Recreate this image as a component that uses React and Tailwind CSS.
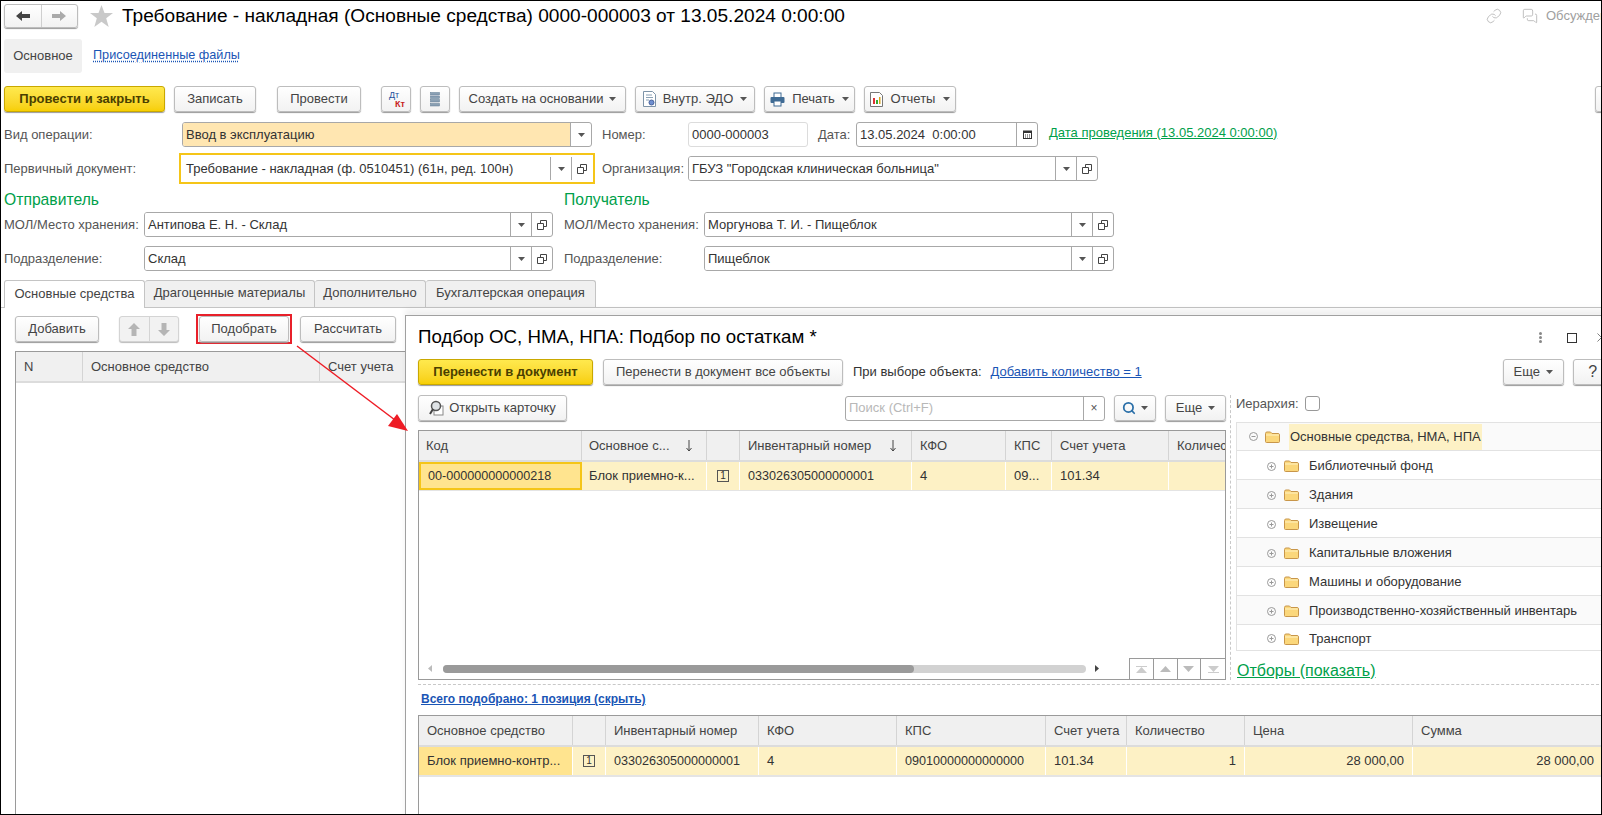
import { Search, Link, MessagesSquare, X } from 'lucide-react';

const Caret = ({ className = '' }) => (
  <svg width="7" height="4" viewBox="0 0 7 4" className={className}><path d="M0 0h7L3.5 4z" fill="#555" /></svg>
);

const Btn = ({ className = '', children }) => (
  <div className={`flex items-center justify-center shrink-0 h-[26px] rounded-[3px] border border-[#bdbdbd] bg-gradient-to-b from-white to-[#f2f2f2] shadow-[0_1px_1px_#9a9a9a] text-[13px] text-[#444] whitespace-nowrap ${className}`}>
    {children}
  </div>
);

const YellowBtn = ({ className = '', children }) => (
  <div className={`flex items-center justify-center shrink-0 h-[26px] rounded-[3px] border border-[#c9a800] bg-gradient-to-b from-[#ffe94d] to-[#f7cf00] shadow-[0_1px_1px_#9a9a9a] text-[13px] font-bold text-[#4a3f00] whitespace-nowrap ${className}`}>
    {children}
  </div>
);

const CopyIcon = () => (
  <svg width="10" height="10" viewBox="0 0 10 10" fill="none" stroke="#444"><path d="M3.500 3V.500h6v6H7" /><path d="M.500 3.500h6v6h-6z" /></svg>
);

const FieldButtons = ({ copy = true }) => (
  <>
    <div className="flex items-center justify-center w-[21px] h-full border-l border-[#a8a8a8]"><Caret /></div>
    {copy && <div className="flex items-center justify-center w-[21px] h-full border-l border-[#a8a8a8]"><CopyIcon /></div>}
  </>
);

const Field = ({ className = '', text, bg = 'bg-white', copy = true }) => (
  <div className={`flex items-center shrink-0 h-[25px] rounded-[3px] border border-[#a8a8a8] text-[13px] text-[#333] overflow-hidden ${className}`}>
    <div className={`flex-1 h-full flex items-center pl-[3px] whitespace-nowrap ${bg}`}>{text}</div>
    <FieldButtons copy={copy} />
  </div>
);

const Label = ({ className = '', children }) => (
  <div className={`shrink-0 text-[13px] text-[#555] whitespace-nowrap ${className}`}>{children}</div>
);

const ArrowIcon = ({ dir, color }) => (
  <svg width="14" height="12" viewBox="0 0 14 12" fill={color}>
    {dir === 'left' ? <path d="M0 6l6-5v3h8v4H6v3z" /> : <path d="M14 6L8 1v3H0v4h8v3z" />}
  </svg>
);

const VArrow = ({ down }) => (
  <svg width="12" height="13" viewBox="0 0 12 13" fill="#b5b5b5" className={down ? 'rotate-180' : ''}><path d="M6 0l6 6H8.500v7h-5V6H0z" /></svg>
);

const SortDown = ({ className = '' }) => (
  <svg width="8" height="12" viewBox="0 0 8 12" fill="none" stroke="#444" className={className}><path d="M4 0v11M1.500 8L4 11l2.500-3" /></svg>
);

const Folder = () => (
  <svg width="15" height="12" viewBox="0 0 15 12" className="shrink-0">
    <path d="M.5 2.500A1.500 1.500 0 0 1 2 1h3.500L7 2.500h6A1.500 1.500 0 0 1 14.500 4v6.500A1 1 0 0 1 13.500 11.500h-12a1 1 0 0 1-1-1z" fill="#fbd77b" stroke="#c8964a" />
    <path d="M1 4h13" stroke="#fff2c4" />
  </svg>
);

const Toggle = ({ minus }) => (
  <svg width="9" height="9" viewBox="0 0 9 9" fill="none" stroke="#999" className="shrink-0">
    <circle cx="4.500" cy="4.500" r="4" />
    <path d="M2.500 4.500h4" />
    {!minus && <path d="M4.500 2.500v4" />}
  </svg>
);

const OneBox = () => (
  <div className="flex items-center justify-center w-[12px] h-[12px] border border-[#555] text-[10px] leading-none text-[#333]">1</div>
);

const TREE = ['Библиотечный фонд', 'Здания', 'Извещение', 'Капитальные вложения', 'Машины и оборудование', 'Производственно-хозяйственный инвентарь', 'Транспорт'];

function PickWindow() {
  return (
    <div className="absolute left-[404px] top-[314px] w-[1225px] h-[520px] bg-white border border-[#a0a0a0] shadow-[0_-6px_6px_rgba(0,0,0,0.06)] flex flex-col">
      <div className="flex items-center h-[43px] pl-[12px] shrink-0">
        <div className="text-[18.700px] text-black whitespace-nowrap">Подбор ОС, НМА, НПА: Подбор по остаткам *</div>
        <div className="ml-auto flex items-center mr-[20px]">
          <svg width="3" height="11" viewBox="0 0 3 11" fill="#888"><circle cx="1.500" cy="1.500" r="1.500" /><circle cx="1.500" cy="5.500" r="1.500" /><circle cx="1.500" cy="9.500" r="1.500" /></svg>
          <div className="ml-[25px] w-[10px] h-[10px] border border-[#333]" />
          <X size={15} strokeWidth={1} className="ml-[17px] text-[#333]" />
        </div>
      </div>

      <div className="flex items-center pl-[12px] shrink-0">
        <YellowBtn className="w-[175px]">Перенести в документ</YellowBtn>
        <Btn className="w-[240px] ml-[10px]">Перенести в документ все объекты</Btn>
        <span className="ml-[10px] text-[13px] text-[#333] whitespace-nowrap">При выборе объекта:</span>
        <span className="ml-[9px] text-[13px] text-[#1a55b5] underline whitespace-nowrap">Добавить количество = 1</span>
        <Btn className="w-[61px] ml-[361px] gap-[6px]">Еще <Caret /></Btn>
        <Btn className="w-[40px] ml-[9px] text-[16px]">?</Btn>
      </div>

      <div className="flex mt-[10px] pl-[12px] shrink-0 h-[285px]">
        <div className="w-[808px] flex flex-col shrink-0">
          <div className="flex items-center">
            <Btn className="w-[149px] gap-[4px]">
              <svg width="16" height="16" viewBox="0 0 16 16" fill="none">
                <rect x="5" y="6" width="9" height="9" fill="#fff" stroke="#888" />
                <circle cx="7" cy="6" r="4.500" fill="#dfe3e6" stroke="#555" strokeWidth="1.500" />
                <path d="M4 9L1 14" stroke="#444" strokeWidth="2" />
              </svg>
              Открыть карточку
            </Btn>
            <div className="flex items-center w-[260px] h-[25px] ml-[278px] rounded-[3px] border border-[#a8a8a8] text-[13px] text-[#b8b8b8]">
              <span className="flex-1 pl-[3px]">Поиск (Ctrl+F)</span>
              <span className="flex items-center justify-center w-[21px] h-full border-l border-[#a8a8a8] text-[#555] text-[12px]">×</span>
            </div>
            <Btn className="w-[42px] ml-[9px] gap-[5px]"><Search size={14} strokeWidth={3} className="text-[#2a6fa8]" /><Caret /></Btn>
            <Btn className="w-[61px] ml-[9px] gap-[6px]">Еще <Caret /></Btn>
          </div>

          <div className="mt-[9px] flex-1 border border-[#9a9a9a] flex flex-col text-[13px] text-[#444] min-h-0">
            <div className="grid grid-cols-[163px_125px_33px_172px_94px_46px_117px_1fr] h-[31px] bg-[#f0f0f0] border-b-2 border-[#dcdcdc] shrink-0 whitespace-nowrap overflow-hidden">
              <div className="flex items-center pl-[7px] border-r border-[#d4d4d4]">Код</div>
              <div className="flex items-center pl-[7px] border-r border-[#d4d4d4]">Основное с...<SortDown className="ml-auto mr-[13px]" /></div>
              <div className="border-r border-[#d4d4d4]" />
              <div className="flex items-center pl-[8px] border-r border-[#d4d4d4]">Инвентарный номер<SortDown className="ml-auto mr-[14px]" /></div>
              <div className="flex items-center pl-[8px] border-r border-[#d4d4d4]">КФО</div>
              <div className="flex items-center pl-[8px] border-r border-[#d4d4d4]">КПС</div>
              <div className="flex items-center pl-[8px] border-r border-[#d4d4d4]">Счет учета</div>
              <div className="flex items-center pl-[8px] overflow-hidden">Количество</div>
            </div>
            <div className="grid grid-cols-[163px_125px_33px_172px_94px_46px_117px_1fr] h-[29px] bg-[#fdf1c5] border-b border-[#e4e4e4] shrink-0 whitespace-nowrap text-[#333]">
              <div className="flex items-center pl-[7px] bg-[#ffe48f] border-2 border-[#f5c518] text-[12.600px]">00-000000000000218</div>
              <div className="flex items-center pl-[7px] border-r border-white">Блок приемно-к...</div>
              <div className="flex items-center justify-center border-r border-white"><OneBox /></div>
              <div className="flex items-center pl-[8px] border-r border-white text-[12.600px]">033026305000000001</div>
              <div className="flex items-center pl-[8px] border-r border-white">4</div>
              <div className="flex items-center pl-[8px] border-r border-white">09...</div>
              <div className="flex items-center pl-[8px] border-r border-white">101.34</div>
              <div />
            </div>
            <div className="flex-1" />
            <div className="flex items-end h-[21px] shrink-0">
              <div className="flex items-center flex-1 h-[21px]">
                <svg width="4" height="7" viewBox="0 0 4 7" className="ml-[9px]"><path d="M4 0v7L0 3.500z" fill="#bbb" /></svg>
                <div className="relative ml-[11px] w-[643px] h-[8px] rounded-full bg-[#d2d2d2]">
                  <div className="w-[471px] h-full rounded-full bg-[#9a9a9a]" />
                </div>
                <svg width="4" height="7" viewBox="0 0 4 7" className="ml-[9px]"><path d="M0 0v7l4-3.500z" fill="#444" /></svg>
              </div>
              <div className="grid grid-cols-4 w-[96px] h-[21px] border-t border-l border-[#9a9a9a]">
                <div className="flex flex-col items-center justify-center border-r border-[#9a9a9a]"><div className="w-[11px] h-[1px] bg-[#ccc]" /><svg width="11" height="6" viewBox="0 0 11 6"><path d="M5.500 0L11 6H0z" fill="#ccc" /></svg></div>
                <div className="flex items-center justify-center border-r border-[#9a9a9a]"><svg width="11" height="6" viewBox="0 0 11 6"><path d="M5.500 0L11 6H0z" fill="#bbb" /></svg></div>
                <div className="flex items-center justify-center border-r border-[#9a9a9a]"><svg width="11" height="6" viewBox="0 0 11 6"><path d="M0 0h11L5.500 6z" fill="#bbb" /></svg></div>
                <div className="flex flex-col items-center justify-center"><svg width="11" height="6" viewBox="0 0 11 6"><path d="M0 0h11L5.500 6z" fill="#ccc" /></svg><div className="w-[11px] h-[1px] bg-[#ccc]" /></div>
              </div>
            </div>
          </div>
        </div>

        <div className="w-[5px] shrink-0 border-r border-dashed border-[#c8c8c8]" />

        <div className="flex-1 pl-[5px] flex flex-col min-w-0">
          <div className="flex items-center h-[17px] shrink-0 text-[13px] text-[#555]">
            Иерархия:
            <div className="ml-[6px] w-[15px] h-[15px] rounded-[3px] border border-[#999]" />
          </div>
          <div className="mt-[10px] border border-[#e2e2e2] text-[13px] text-[#333]">
            <div className="flex items-center h-[28px] bg-[#fafafa] border-b border-[#e2e2e2] pl-[12px] whitespace-nowrap">
              <Toggle minus />
              <span className="ml-[7px]"><Folder /></span>
              <span className="ml-[9px] h-[26px] px-[1px] flex items-center bg-[#fdf1c5]">Основные средства, НМА, НПА</span>
            </div>
            {TREE.map((name, i) => (
              <div key={name} className={`flex items-center pt-[2px] pl-[30px] whitespace-nowrap ${i % 2 ? 'bg-[#fafafa]' : 'bg-white'} ${i < TREE.length - 1 ? 'h-[29px] border-b border-[#e2e2e2]' : 'h-[25px]'}`}>
                <Toggle />
                <span className="ml-[8px]"><Folder /></span>
                <span className="ml-[10px]">{name}</span>
              </div>
            ))}
          </div>
          <div className="mt-[11px] pl-[1px] text-[16px] leading-[18px] text-[#00a04a] underline whitespace-nowrap">Отборы (показать)</div>
        </div>
      </div>

      <div className="ml-[12px] mt-[4px] border-t border-dashed border-[#c8c8c8] shrink-0" />
      <div className="ml-[15px] mt-[7px] h-[14px] leading-[14px] text-[12px] font-bold text-[#1a55b5] underline whitespace-nowrap">Всего подобрано: 1 позиция (скрыть)</div>

      <div className="ml-[12px] mt-[9px] flex-1 border-t border-l border-[#9a9a9a] text-[13px] text-[#444] whitespace-nowrap">
        <div className="grid grid-cols-[154px_33px_153px_138px_149px_81px_118px_168px_1fr] h-[31px] bg-[#f0f0f0] border-b-2 border-[#dcdcdc]">
          <div className="flex items-center pl-[8px] border-r border-[#d4d4d4]">Основное средство</div>
          <div className="border-r border-[#d4d4d4]" />
          <div className="flex items-center pl-[8px] border-r border-[#d4d4d4]">Инвентарный номер</div>
          <div className="flex items-center pl-[8px] border-r border-[#d4d4d4]">КФО</div>
          <div className="flex items-center pl-[8px] border-r border-[#d4d4d4]">КПС</div>
          <div className="flex items-center pl-[8px] border-r border-[#d4d4d4]">Счет учета</div>
          <div className="flex items-center pl-[8px] border-r border-[#d4d4d4]">Количество</div>
          <div className="flex items-center pl-[8px] border-r border-[#d4d4d4]">Цена</div>
          <div className="flex items-center pl-[8px]">Сумма</div>
        </div>
        <div className="grid grid-cols-[154px_33px_153px_138px_149px_81px_118px_168px_1fr] h-[30px] bg-[#fdf1c5] border-b-2 border-[#e4e4e4] text-[#333]">
          <div className="flex items-center pl-[8px] bg-[#ffe48f] border-r border-white">Блок приемно-контр...</div>
          <div className="flex items-center justify-center border-r border-white"><OneBox /></div>
          <div className="flex items-center pl-[8px] border-r border-white text-[12.600px]">033026305000000001</div>
          <div className="flex items-center pl-[8px] border-r border-white">4</div>
          <div className="flex items-center pl-[8px] border-r border-white text-[12.600px]">09010000000000000</div>
          <div className="flex items-center pl-[8px] border-r border-white">101.34</div>
          <div className="flex items-center justify-end pr-[8px] border-r border-white">1</div>
          <div className="flex items-center justify-end pr-[8px] border-r border-white">28 000,00</div>
          <div className="flex items-center justify-end pr-[35px]">28 000,00</div>
        </div>
      </div>
    </div>
  );
}

export default function App() {
  return (
    <div className="relative w-[1602px] h-[815px] overflow-hidden border border-black bg-white font-['Liberation_Sans',Arial,sans-serif] flex flex-col">
      {/* шапка */}
      <div className="flex items-center h-[24px] mt-[3px] pl-[3px] shrink-0">
        <div className="flex w-[74px] h-[24px] rounded-[3px] border border-[#bdbdbd] bg-gradient-to-b from-white to-[#f2f2f2] shadow-[0_1px_1px_#9a9a9a]">
          <div className="flex-1 flex items-center justify-center border-r border-[#cfcfcf]"><ArrowIcon dir="left" color="#444" /></div>
          <div className="flex-1 flex items-center justify-center"><ArrowIcon dir="right" color="#aaa" /></div>
        </div>
        <svg width="23" height="22" viewBox="0 0 23 22" fill="#c9c9c9" className="ml-[12px]"><path d="M11.500 0l3 8h8.500l-6.800 5.200L18.700 22l-7.200-5.300L4.300 22l2.500-8.800L0 8h8.500z" /></svg>
        <div className="ml-[9px] text-[19.100px] text-black whitespace-nowrap">Требование - накладная (Основные средства) 0000-000003 от 13.05.2024 0:00:00</div>
        <div className="ml-auto flex items-center text-[13px] text-[#a0a0a0] whitespace-nowrap w-[115px] overflow-hidden shrink-0">
          <Link size={16} strokeWidth={1} className="shrink-0" />
          <MessagesSquare size={16} strokeWidth={1} className="ml-[20px] shrink-0" />
          <span className="ml-[8px]">Обсуждения</span>
        </div>
      </div>

      {/* разделы */}
      <div className="flex items-center h-[34px] mt-[11px] pl-[3px] shrink-0 text-[13px]">
        <div className="flex items-center justify-center w-[78px] h-full rounded-[3px] bg-[#f0f0f0] text-[#444]">Основное</div>
        <span className="ml-[11px] text-[12.700px] text-[#1a55b5] underline decoration-dotted">Присоединенные файлы</span>
      </div>

      {/* команды */}
      <div className="flex items-center h-[26px] mt-[13px] pl-[3px] shrink-0">
        <YellowBtn className="w-[161px]">Провести и закрыть</YellowBtn>
        <Btn className="w-[82px] ml-[9px]">Записать</Btn>
        <Btn className="w-[84px] ml-[21px]">Провести</Btn>
        <Btn className="w-[30px] ml-[20px] relative">
          <span className="absolute left-[7px] top-[4px] text-[9px] leading-none text-[#1a4f9c]">Дт</span>
          <span className="absolute left-[13px] top-[13px] text-[9px] leading-none font-bold text-[#c81e1e]">Кт</span>
        </Btn>
        <Btn className="w-[30px] ml-[9px]">
          <svg width="10" height="15" viewBox="0 0 10 15" fill="#8aa0b4" stroke="#5f7a92" strokeWidth="0.500">
            <rect x="0.500" y="0.500" width="9" height="2.500" /><rect x="0.500" y="4" width="9" height="2.500" /><rect x="0.500" y="7.500" width="9" height="2.500" /><rect x="0.500" y="11.500" width="9" height="2.500" />
          </svg>
        </Btn>
        <Btn className="w-[167px] ml-[9px] gap-[6px]">Создать на основании <Caret /></Btn>
        <Btn className="w-[120px] ml-[9px] gap-[7px]">
          <svg width="13" height="16" viewBox="0 0 13 16" fill="none">
            <path d="M.500.500h9l3 3v12H.500z" fill="#fff" stroke="#7d93a8" />
            <path d="M3 4h6M3 6.500h7M3 9h3" stroke="#8aa0b4" />
            <circle cx="8.500" cy="11.500" r="2.500" fill="#6f8fd0" stroke="#47619c" />
          </svg>
          Внутр. ЭДО <Caret />
        </Btn>
        <Btn className="w-[91px] ml-[9px] gap-[7px]">
          <svg width="15" height="15" viewBox="0 0 15 15">
            <rect x="4" y="1" width="7" height="5" fill="#fff" stroke="#3f6b94" />
            <rect x="0.500" y="5" width="14" height="6" rx="1" fill="#3f6b94" />
            <rect x="4" y="9" width="7" height="5" fill="#fff" stroke="#3f6b94" />
          </svg>
          Печать <Caret />
        </Btn>
        <Btn className="w-[92px] ml-[9px] gap-[8px]">
          <svg width="13" height="15" viewBox="0 0 13 15" fill="none">
            <path d="M.500.500h9l3 3v11H.500z" fill="#fff" stroke="#777" />
            <path d="M3 6h2v6H3z" fill="#d33" /><path d="M6 8h2v4H6z" fill="#3a3" /><path d="M9 5h1.500v7H9z" fill="#d9a520" />
          </svg>
          Отчеты <Caret />
        </Btn>
        <Btn className="w-[20px] ml-[639px]" />
      </div>

      {/* реквизиты */}
      <div className="flex items-center h-[25px] mt-[10px] pl-[3px] shrink-0">
        <Label className="w-[178px]">Вид операции:</Label>
        <Field className="w-[410px]" text="Ввод в эксплуатацию" bg="bg-[#ffe6b1]" copy={false} />
        <Label className="w-[86px] ml-[10px]">Номер:</Label>
        <div className="flex items-center w-[120px] h-[25px] pl-[3px] rounded-[3px] border border-[#dcdcdc] text-[13px] text-[#333]">0000-000003</div>
        <Label className="w-[38px] ml-[10px]">Дата:</Label>
        <div className="flex items-center w-[182px] h-[25px] rounded-[3px] border border-[#a8a8a8] text-[13px] text-[#333] shrink-0">
          <span className="flex-1 pl-[3px] whitespace-pre">13.05.2024  0:00:00</span>
          <span className="flex items-center justify-center w-[21px] h-full border-l border-[#a8a8a8]">
            <svg width="9" height="9" viewBox="0 0 9 9">
              <rect x="0.500" y="1" width="8" height="7.500" fill="#fff" stroke="#333" />
              <path d="M0 1h9v2H0z" fill="#333" />
              <path d="M2 4.500h1v1H2zM4 4.500h1v1H4zM6 4.500h1v1H6zM2 6.500h1v1H2zM4 6.500h1v1H4zM6 6.500h1v1H6z" fill="#333" />
            </svg>
          </span>
        </div>
        <span className="ml-[11px] -mt-[4px] text-[13px] text-[#00a04a] underline whitespace-nowrap">Дата проведения (13.05.2024 0:00:00)</span>
      </div>

      <div className="flex items-center h-[31px] mt-[6px] pl-[3px] shrink-0">
        <Label className="w-[175px]">Первичный документ:</Label>
        <div className="flex items-center w-[416px] h-full border-2 border-[#f5c518] shrink-0 text-[13px] text-[#333]">
          <span className="flex-1 pl-[5px] whitespace-nowrap">Требование - накладная (ф. 0510451) (61н, ред. 100н)</span>
          <div className="flex h-[23px] mr-[1px]"><FieldButtons /></div>
        </div>
        <Label className="w-[86px] ml-[7px]">Организация:</Label>
        <Field className="w-[410px]" text={'ГБУЗ "Городская клиническая больница"'} />
      </div>

      <div className="flex items-center h-[18px] mt-[7px] pl-[3px] shrink-0 text-[15.700px] text-[#00a04a]">
        <span className="w-[560px]">Отправитель</span>
        <span>Получатель</span>
      </div>

      <div className="flex items-center h-[25px] mt-[3px] pl-[3px] shrink-0">
        <Label className="w-[140px]">МОЛ/Место хранения:</Label>
        <Field className="w-[409px]" text="Антипова Е. Н. - Склад" />
        <Label className="w-[140px] ml-[11px]">МОЛ/Место хранения:</Label>
        <Field className="w-[410px]" text="Моргунова Т. И. - Пищеблок" />
      </div>

      <div className="flex items-center h-[25px] mt-[9px] pl-[3px] shrink-0">
        <Label className="w-[140px]">Подразделение:</Label>
        <Field className="w-[409px]" text="Склад" />
        <Label className="w-[140px] ml-[11px]">Подразделение:</Label>
        <Field className="w-[410px]" text="Пищеблок" />
      </div>

      {/* вкладки */}
      <div className="flex h-[28px] mt-[9px] pl-[3px] border-b border-[#c4c4c4] shrink-0 text-[13px] text-[#444] whitespace-nowrap">
        <div className="flex items-center justify-center w-[141px] h-[28px] pb-[2px] bg-white border border-b-0 border-[#c4c4c4] rounded-t-[3px]">Основные средства</div>
        <div className="flex items-center justify-center w-[170px] pb-[2px] bg-[#f0f0f0] border-t border-r border-[#c4c4c4] rounded-t-[3px]">Драгоценные материалы</div>
        <div className="flex items-center justify-center w-[111px] pb-[2px] bg-[#f0f0f0] border-t border-r border-[#c4c4c4] rounded-t-[3px]">Дополнительно</div>
        <div className="flex items-center justify-center w-[170px] pb-[2px] bg-[#f0f0f0] border-t border-r border-[#c4c4c4] rounded-t-[3px]">Бухгалтерская операция</div>
      </div>

      <div className="flex items-center h-[26px] mt-[8px] pl-[14px] shrink-0">
        <Btn className="w-[84px]">Добавить</Btn>
        <div className="flex w-[60px] h-[26px] ml-[20px] rounded-[3px] border border-[#d4d4d4] bg-[#f2f2f2] shadow-[0_1px_1px_#bbb]">
          <div className="flex-1 flex items-center justify-center border-r border-[#d4d4d4]"><VArrow /></div>
          <div className="flex-1 flex items-center justify-center"><VArrow down /></div>
        </div>
        <div className="flex items-center justify-center shrink-0 w-[96px] h-[30px] ml-[17px] border-2 border-[#e8202a]">
          <Btn className="w-[90px]">Подобрать</Btn>
        </div>
        <Btn className="w-[96px] ml-[8px]">Рассчитать</Btn>
      </div>

      <div className="flex-1 mt-[9px] ml-[14px] border-t border-l border-[#9a9a9a] text-[13px] text-[#444]">
        <div className="grid grid-cols-[67px_237px_1fr] h-[31px] bg-[#f0f0f0] border-b-2 border-[#dcdcdc]">
          <div className="flex items-center pl-[8px] border-r border-[#d4d4d4]">N</div>
          <div className="flex items-center pl-[8px] border-r border-[#d4d4d4]">Основное средство</div>
          <div className="flex items-center pl-[8px]">Счет учета</div>
        </div>
      </div>

      <PickWindow />

      {/* стрелка */}
      <svg className="absolute left-[294px] top-[343px] pointer-events-none" width="116" height="90" viewBox="0 0 116 90">
        <path d="M2 2L100 76" stroke="#ee1c25" strokeWidth="1.500" />
        <path d="M113 87L93 82L102 70z" fill="#ee1c25" />
      </svg>
    </div>
  );
}
